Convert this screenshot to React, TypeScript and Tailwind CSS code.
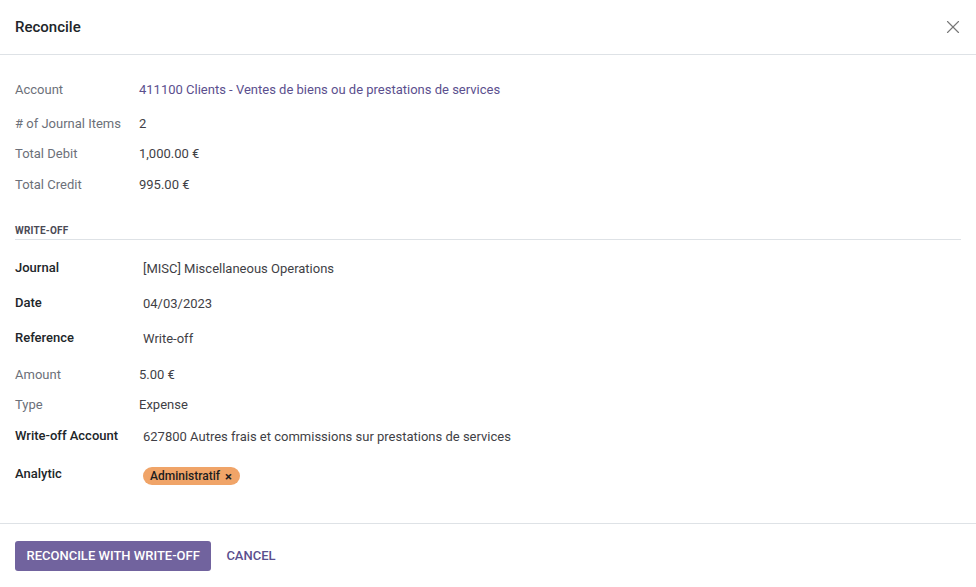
import { X } from 'lucide-react';

const font = { fontFamily: 'Roboto, "Noto Sans", sans-serif' };

function Row({ label, value, strong, link, mt }: { label: string; value: React.ReactNode; strong?: boolean; link?: boolean; mt: string }) {
  return (
    <div className={`flex items-center h-[30px] ${mt}`}>
      <div className={`w-[124px] shrink-0 ${strong ? 'font-medium text-[#212529] -mt-[2px]' : 'text-[#6c7079]'}`}>{label}</div>
      <div className={`${strong ? 'pl-1' : ''} ${link ? 'text-[#5b4f8e]' : 'text-[#3f3f46]'}`}>{value}</div>
    </div>
  );
}

export default function App() {
  return (
    <div style={font} className="w-[976px] h-[587px] bg-white flex flex-col text-[13px]">
      <div className="h-[55px] shrink-0 flex items-center justify-between pl-[15px] pr-[12px] border-b border-[#dee2e6]">
        <div className="text-[15px] font-medium text-[#212529]">Reconcile</div>
        <X className="w-[22px] h-[22px] text-[#777]" strokeWidth={1.25} />
      </div>

      <div className="flex-1 px-[15px] pt-[20px]">
        <Row mt="mt-0" label="Account" value="411100 Clients - Ventes de biens ou de prestations de services" link />
        <Row mt="mt-[4px]" label="# of Journal Items" value="2" />
        <Row mt="mt-0" label="Total Debit" value="1,000.00 €" />
        <Row mt="mt-[1px]" label="Total Credit" value="995.00 €" />

        <div className="mt-[24px] mb-[14px] pb-[1px] border-b border-[#dee2e6] text-[10px] font-bold text-[#4a4a55] tracking-[0.02em] leading-[14px]">
          WRITE-OFF
        </div>

        <Row mt="mt-0" label="Journal" value="[MISC] Miscellaneous Operations" strong />
        <Row mt="mt-[5px]" label="Date" value="04/03/2023" strong />
        <Row mt="mt-[5px]" label="Reference" value="Write-off" strong />
        <Row mt="mt-[6px]" label="Amount" value="5.00 €" />
        <Row mt="mt-0" label="Type" value="Expense" />
        <Row mt="mt-[2px]" label="Write-off Account" value="627800 Autres frais et commissions sur prestations de services" strong />
        <Row
          mt="mt-[8px]"
          label="Analytic"
          strong
          value={
            <span className="mt-[3px] inline-flex items-center gap-[5px] rounded-full bg-[#f0a468] pl-[7px] pr-[8px] h-[18px] text-[12px] font-medium text-[#1d1d1f]">
              Administratif <span className="text-[13px] font-bold leading-none">×</span>
            </span>
          }
        />
      </div>

      <div className="h-[64px] shrink-0 border-t border-[#dee2e6] flex items-center gap-[15px] px-[15px]">
        <button className="h-[30px] px-[11.5px] rounded-[3px] bg-[#71639e] text-white text-[13px] font-medium uppercase">
          Reconcile with Write-off
        </button>
        <button className="text-[13px] font-medium text-[#5b4f8e] uppercase">Cancel</button>
      </div>
    </div>
  );
}
